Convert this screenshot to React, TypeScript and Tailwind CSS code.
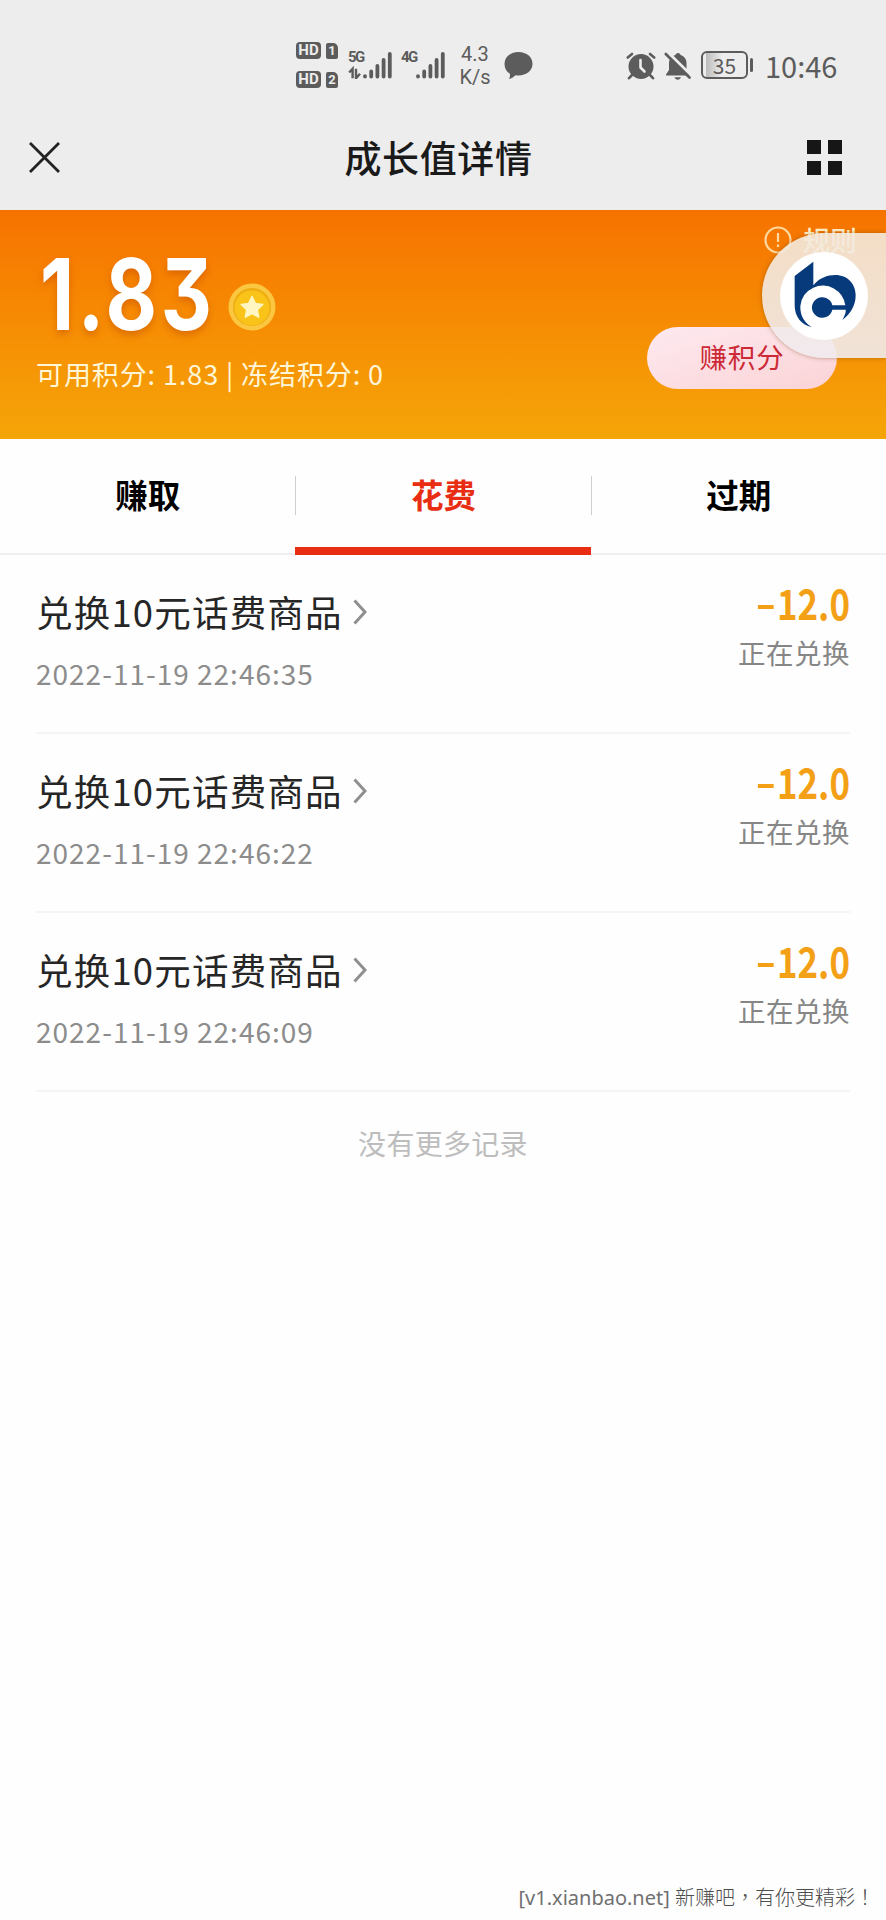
import React from 'react';

type RecordItem = {
  title: string;
  time: string;
  amount: string;
  status: string;
};

const tabs = [
  { name: '赚取', active: false },
  { name: '花费', active: true },
  { name: '过期', active: false },
];

const records: RecordItem[] = [
  { title: '兑换10元话费商品', time: '2022-11-19 22:46:35', amount: '12.0', status: '正在兑换' },
  { title: '兑换10元话费商品', time: '2022-11-19 22:46:22', amount: '12.0', status: '正在兑换' },
  { title: '兑换10元话费商品', time: '2022-11-19 22:46:09', amount: '12.0', status: '正在兑换' },
];

const HdBadge = ({ sim }: { sim: string }) => (
  <div className="flex items-center gap-[5px]">
    <span className="flex h-[17px] w-[25px] items-center justify-center rounded-[4px] bg-[#5c5c5c] font-['Roboto'] text-[15px] leading-none font-bold text-[#ededed]">
      HD
    </span>
    <span className="flex h-[16px] w-[12px] items-center justify-center rounded-[2px] rounded-tr-[5px] bg-[#5c5c5c] font-['Roboto'] text-[13px] leading-none font-bold text-[#ededed]">
      {sim}
    </span>
  </div>
);

const Signal = ({ data }: { data?: boolean }) => (
  <svg className="h-[28px] w-[44px]" viewBox="0 0 44 28" fill="none" stroke="#5c5c5c" strokeWidth="3.8" strokeLinecap="round">
    <path d="M17 25.2v.3M23.2 20.5v5M29.4 15v10.500M35.600 9v16.500M41.800 2.800v22.700" />
    {data && <path d="M1.200 21.500L4.600 17.800v9.500M8 17.800v9.500l4-4.500" strokeWidth="2.400" strokeLinecap="butt" />}
  </svg>
);

const AlarmIcon = () => (
  <svg className="h-[28px] w-[30px]" viewBox="0 0 30 28" fill="none" stroke="#5c5c5c" strokeLinecap="round">
    <circle cx="15" cy="14.500" r="12.500" fill="#5c5c5c" stroke="none" />
    <path d="M1.800 5.500L6 2M28.200 5.500L24 2M6 23l-3 3.200M24 23l3 3.200" strokeWidth="2.600" />
    <path d="M14.500 8v7.500l4 4" stroke="#ededed" strokeWidth="2.600" strokeLinejoin="round" />
  </svg>
);

const BellOffIcon = () => (
  <svg className="h-[28px] w-[28px]" viewBox="0 0 28 28" fill="none">
    <path d="M14 1c1.500 0 2.300 1 2.500 2 4 1.200 6 4.400 6 8.500V18l3 4.500v1H2v-1L5 18v-6.500C5 7.400 7.400 4.200 11.500 3c.2-1 1-2 2.500-2z" fill="#5c5c5c" />
    <path d="M10.500 25.300h6.500c-.6 1.600-1.800 2.500-3.300 2.500s-2.700-.9-3.200-2.500z" fill="#5c5c5c" />
    <path d="M3.500 0L28 24" stroke="#ededed" strokeWidth="3" />
    <path d="M1.800 2L25.500 25.500" stroke="#5c5c5c" strokeWidth="2.600" strokeLinecap="round" />
  </svg>
);

const StatusBar = () => (
  <div className="flex h-[104px] items-start pt-[41px] pl-[296px] text-[#5c5c5c]">
    <div className="flex flex-col gap-[12px] pt-px">
      <HdBadge sim="1" />
      <HdBadge sim="2" />
    </div>
    <div className="ml-[10px] flex pt-[10px]">
      <span className="-mr-[14px] w-[14px] font-['Roboto'] text-[15px] leading-[13px] font-bold tracking-[-1.500px]">5G</span>
      <Signal data />
    </div>
    <div className="ml-[9px] flex pt-[10px]">
      <span className="-mr-[14px] w-[14px] font-['Roboto'] text-[15px] leading-[13px] font-bold tracking-[-1.500px]">4G</span>
      <Signal />
    </div>
    <div className="ml-[13px] w-[34px] pt-[2px] text-center font-['Roboto'] text-[20px] leading-[23px]">
      <p>4.3</p>
      <p>K/s</p>
    </div>
    <svg className="mt-[11px] ml-[12px] h-[28px] w-[29px]" viewBox="0 0 29 28" fill="#5c5c5c">
      <path d="M14.500 0C22.500 0 28.500 5 28.500 11.800S22.500 23.500 14.500 23.500c-1 0-2-.1-3-.3-2 2-4 3.200-6.500 3.800.9-1.500 1.200-3.200.9-5.300C2.500 19.700.5 16.200.5 12 .5 5 6.500 0 14.500 0z" />
    </svg>
    <div className="ml-[93px] pt-[11px]">
      <AlarmIcon />
    </div>
    <div className="ml-[8px] pt-[11px]">
      <BellOffIcon />
    </div>
    <div className="ml-[9px] flex items-center pt-[10px]">
      <div className="flex h-[28px] w-[47px] items-center justify-center rounded-[6px] border-[2.500px] border-[#5c5c5c] bg-linear-to-r from-[#ededed] from-[8%] via-[#bdbdbd] via-[8%] to-[#ededed] to-[45%] font-['Noto_Sans_CJK_SC'] text-[21px] leading-none">
        35
      </div>
      <span className="ml-[2px] h-[14px] w-[3px] rounded-sm bg-[#5c5c5c]" />
    </div>
    <span className="ml-[12px] pt-[7px] font-['Noto_Sans_CJK_SC'] text-[29px] leading-[35px]">10:46</span>
  </div>
);

const TitleBar = () => (
  <div className="flex h-[106px] items-center justify-between pr-[44px] pl-[29px]">
    <svg className="h-[31px] w-[31px]" viewBox="0 0 31 31" stroke="#222" strokeWidth="2.800">
      <path d="M1 1l29 29M30 1L1 30" />
    </svg>
    <h1 className="ml-[10px] text-[37px] leading-none font-medium tracking-[0.600px] text-[#1a1a1a]">成长值详情</h1>
    <div className="grid grid-cols-2 gap-[7px]">
      <span className="h-[14px] w-[14px] bg-[#161616]" />
      <span className="h-[14px] w-[14px] bg-[#161616]" />
      <span className="h-[14px] w-[14px] bg-[#161616]" />
      <span className="h-[14px] w-[14px] bg-[#161616]" />
    </div>
  </div>
);

const Coin = () => (
  <svg className="h-[48px] w-[48px]" viewBox="0 0 48 48">
    <circle cx="24" cy="24" r="23.500" fill="#fbc640" />
    <circle cx="24" cy="24" r="19" fill="#eead10" />
    <circle cx="24" cy="25" r="17.500" fill="#f9c31a" />
    <path d="M24 13.500l3.300 6.900 7.500 1-5.500 5.200 1.400 7.500-6.700-3.600-6.700 3.600 1.400-7.500-5.500-5.200 7.500-1z" fill="#fff6c2" stroke="#fff6c2" strokeWidth="1.500" strokeLinejoin="round" />
  </svg>
);

const FloatingLogo = () => (
  <div className="absolute top-[23px] right-0 flex h-[125px] w-[124px] items-center rounded-l-full bg-linear-to-b from-[#f3e9dc]/90 to-[#f0ebee]/90 pl-[18px] shadow-[0_0_4px_rgba(120,70,20,0.500)]">
    <svg className="h-[88px] w-[88px]" viewBox="540 138 264 264">
      <circle cx="672" cy="270" r="132" fill="#fff" />
      <path d="M584 210L640 167V238C658 216 682 207 706 207C742 207 767 233 767 268C767 300 750 325 727 342C736 326 738 318 737 311H697A31 31 0 1 1 697 298H736A68 68 0 0 0 640 245A68 68 0 0 0 601 300C600 330 614 351 636 364C604 357 584 332 584 298Z" fill="#063a7a" />
    </svg>
  </div>
);

const Hero = () => (
  <section className="relative flex h-[229px] justify-between bg-linear-to-b from-[#f67200] to-[#f5a508] pl-[36px] text-white">
    <div>
      <div className="flex h-[130px] items-start pt-[35px]">
        <span className="ml-[4px] w-[188px] origin-left scale-x-[0.8] font-['Inter'] text-[99px] leading-[98px] font-bold tracking-[4.500px] [font-feature-settings:'cv09'] [text-shadow:0_4px_8px_rgba(190,70,0,0.450)]">
          1.83
        </span>
        <div className="mt-[38px]">
          <Coin />
        </div>
      </div>
      <p className="mt-[18px] text-[27px] leading-[32px] tracking-[0.900px] text-[#fff6d8]">可用积分: 1.83 | 冻结积分: 0</p>
    </div>
    <div className="flex flex-col items-end">
      <div className="mt-[12px] mr-[29px] flex items-center gap-[11px] text-[#fff0c8]">
        <svg className="h-[28px] w-[28px] text-[#ffd9a0]" viewBox="0 0 28 28" fill="none" stroke="currentColor" strokeWidth="2.200">
          <circle cx="14" cy="14" r="12.500" />
          <path d="M14 7v9M14 18.500v2.500" />
        </svg>
        <span className="text-[27px] leading-[36px] font-medium">规则</span>
      </div>
      <button className="mt-[69px] mr-[49px] h-[62px] w-[190px] rounded-full bg-linear-to-br from-[#fdeaf0] to-[#fbd3d6] pb-[2px] text-[27.500px] leading-none tracking-[0.800px] text-[#cc2a36]">
        赚积分
      </button>
    </div>
    <FloatingLogo />
  </section>
);

const Tabs = () => (
  <nav className="flex h-[116px] shadow-[inset_0_-2px_0_#f0f0f0]">
    {tabs.map((tab, i) => (
      <div
        key={tab.name}
        className={`flex flex-1 items-stretch border-b-[8px] pt-[37px] ${tab.active ? 'border-[#e82d12]' : 'border-transparent'}`}
      >
        <div
          className={`flex h-[39px] flex-1 items-center justify-center pb-[2px] text-[32.500px] leading-none font-bold ${
            tab.active ? 'text-[#e82d12]' : 'text-black'
          } ${i > 0 ? 'border-l border-[#cfcfcf]' : ''}`}
        >
          {tab.name}
        </div>
      </div>
    ))}
  </nav>
);

const RecordRow = ({ item }: { item: RecordItem }) => (
  <li className="mx-[36px] flex h-[179px] justify-between border-b-2 border-[#f5f5f5]">
    <div className="pt-[35px]">
      <div className="flex items-center gap-[10px]">
        <span className="text-[36.500px] leading-[44px] tracking-[1.200px] text-[#262626]">{item.title}</span>
        <svg className="h-[26px] w-[14px]" viewBox="0 0 14 26" fill="none" stroke="#8f8f8f" strokeWidth="3">
          <path d="M1.500 1.500L12 13 1.500 24.500" />
        </svg>
      </div>
      <p className="mt-[22px] text-[28px] leading-[34px] tracking-[1px] text-[#8c8c8c]">{item.time}</p>
    </div>
    <div className="flex flex-col items-end pt-[26px]">
      <div className="flex origin-right scale-x-[0.830] items-center gap-[4px] text-[#f3a017]">
        <span className="mt-[9px] h-[4px] w-[19px] bg-[#f3a017]" />
        <span className="text-[42px] leading-[42px] font-bold">{item.amount}</span>
      </div>
      <p className="mt-[12px] text-[27.500px] leading-[34px] tracking-[0.500px] text-[#868686]">{item.status}</p>
    </div>
  </li>
);

const App = () => {
  return (
    <div className="flex h-[1920px] w-[886px] flex-col overflow-hidden bg-[#fefefe] font-['Noto_Sans_CJK_SC',sans-serif]">
      <header className="h-[210px] bg-[#ededed]">
        <StatusBar />
        <TitleBar />
      </header>
      <Hero />
      <Tabs />
      <ul>
        {records.map((item) => (
          <RecordRow key={item.time} item={item} />
        ))}
      </ul>
      <p className="mt-[33px] text-center text-[28px] leading-[36px] tracking-[0.300px] text-[#bdbdbd]">没有更多记录</p>

      {/* Watermark */}
      <footer className="mt-auto pr-[11px] pb-[8px] text-right font-['Noto_Sans','Noto_Sans_CJK_SC',sans-serif] text-[20px] leading-[28px] text-[#707070]">
        [v1.xianbao.net] <span className="font-light text-[#4d4d4d]">新赚吧<span className="font-['Noto_Sans_CJK_TC']">，</span>有你更精彩<span className="font-['Noto_Sans_CJK_TC']">！</span></span>
      </footer>
    </div>
  );
};

export default App;
